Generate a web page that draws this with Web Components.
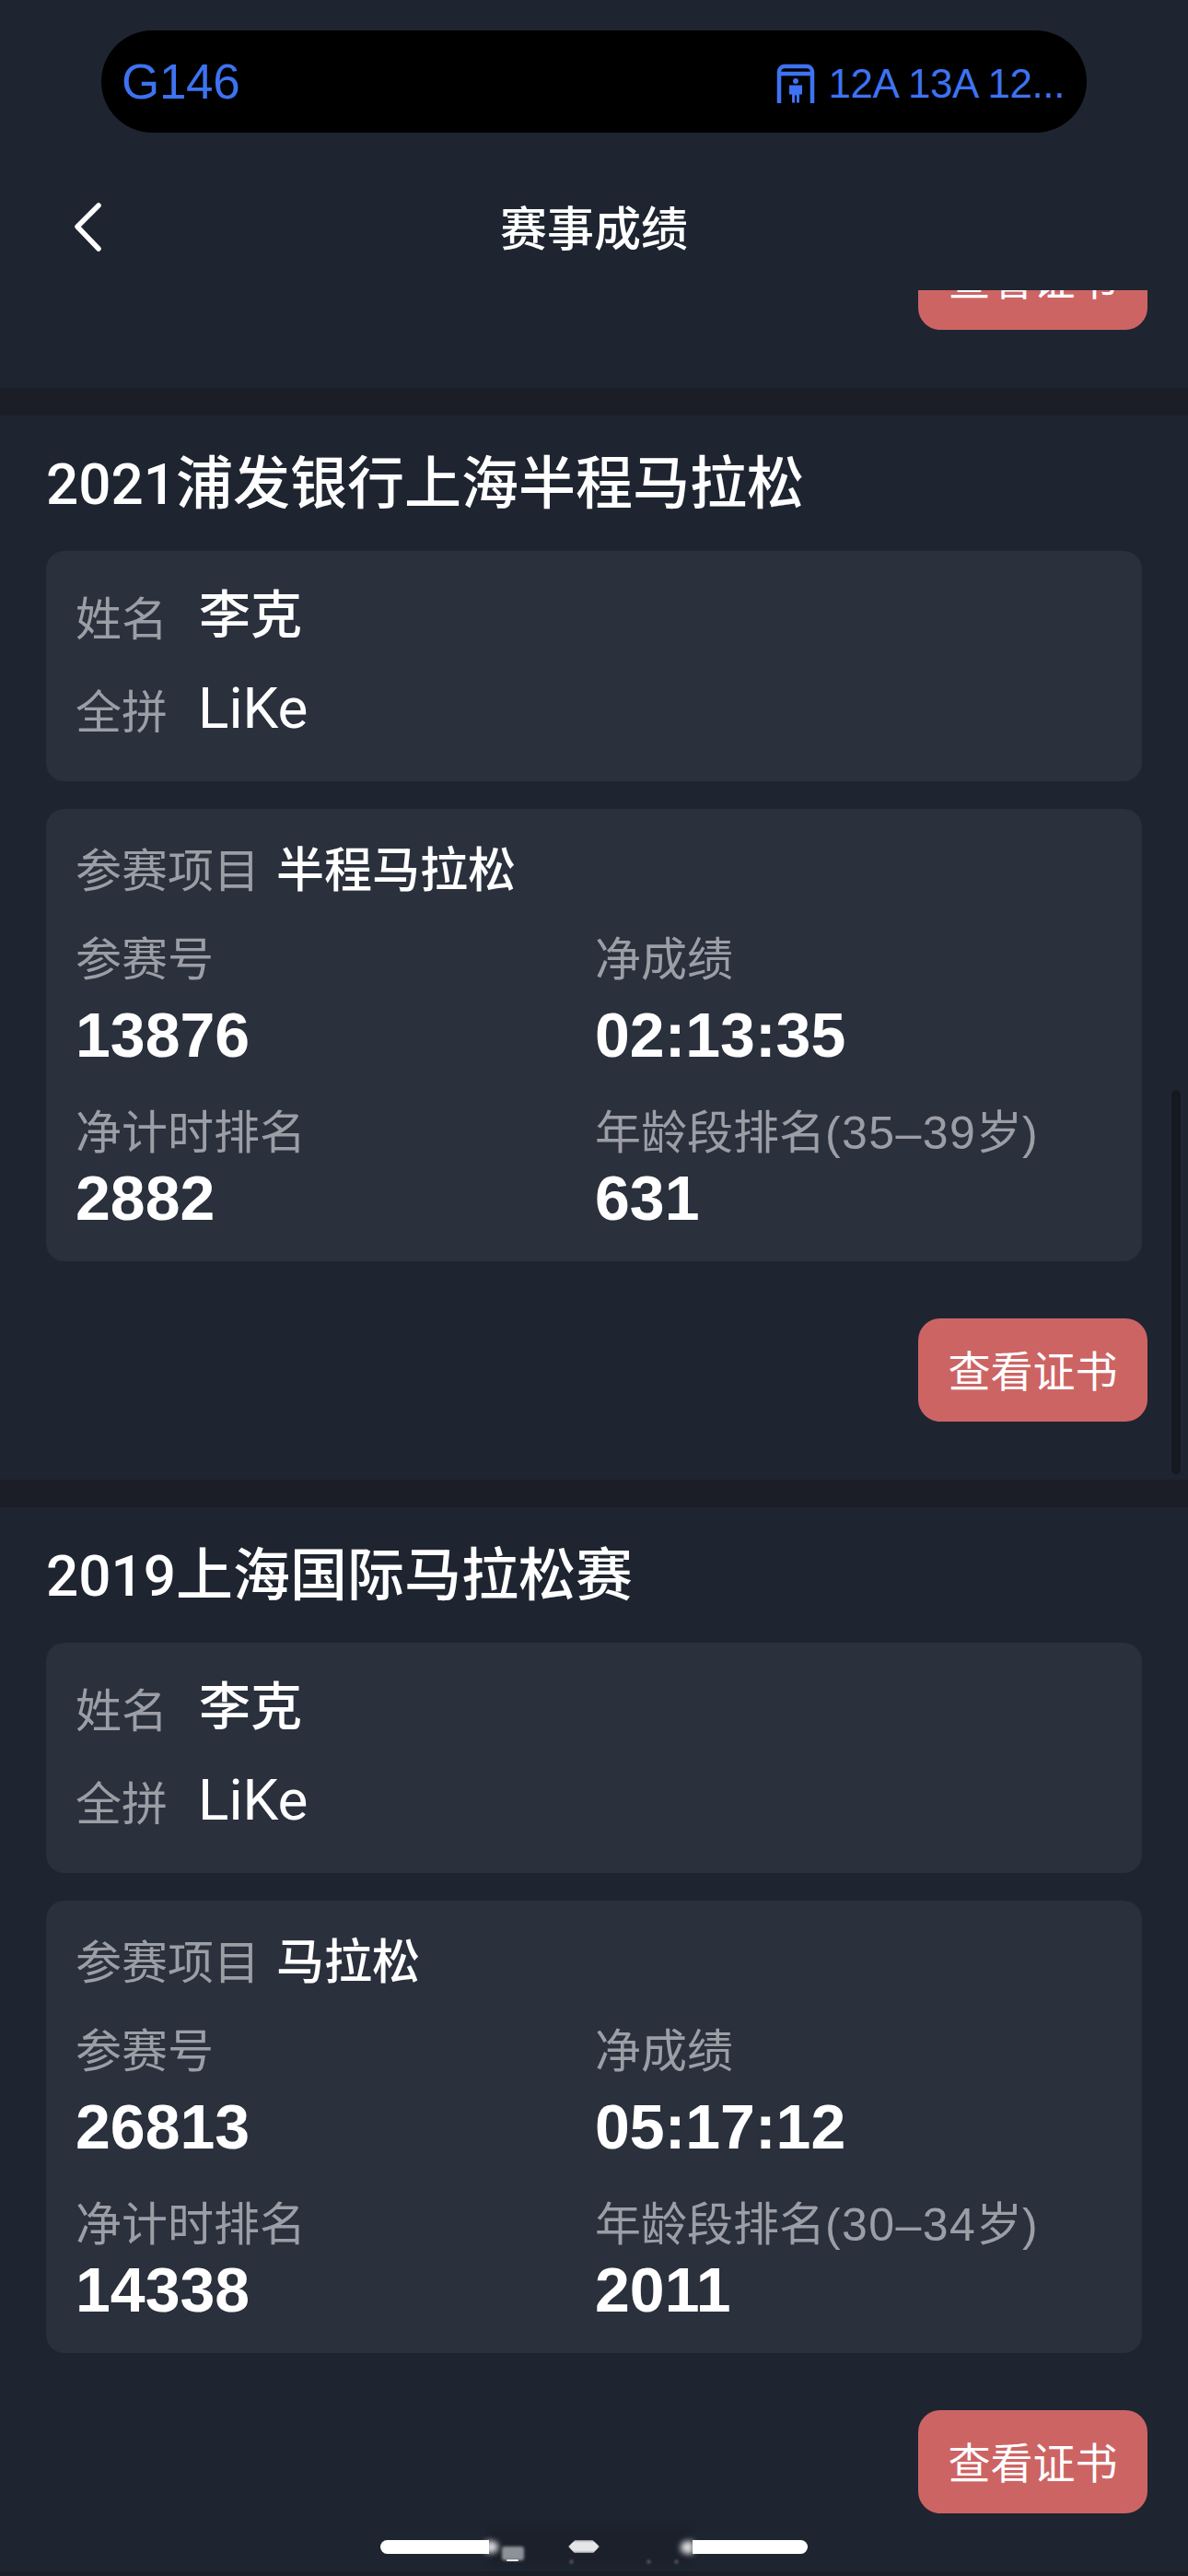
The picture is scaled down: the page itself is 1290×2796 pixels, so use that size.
<!DOCTYPE html>
<html lang="zh-CN"><head><meta charset="utf-8">
<style>
html,body{margin:0;padding:0;background:#1e2530}
body{width:1290px;height:2796px;overflow:hidden;position:relative;font-family:"Liberation Sans","Noto Sans CJK SC",sans-serif;color:#fff}
</style></head><body>
<app-header></app-header>
<score-list>
<div class="clip" slot="clip"><cert-button></cert-button></div>
<race-card title-text="2021浦发银行上海半程马拉松" event="半程马拉松" bib="13876" net="02:13:35" rank="2882" age="35–39" agerank="631"></race-card>
<race-card title-text="2019上海国际马拉松赛" event="马拉松" bib="26813" net="05:17:12" rank="14338" age="30–34" agerank="2011"></race-card>
</score-list>
<home-bar></home-bar>
<script>
const def=(n,html,setup)=>customElements.define(n,class extends HTMLElement{constructor(){super();this.attachShadow({mode:'open'}).innerHTML=html;}connectedCallback(){setup&&setup(this)}});
def('app-header',`<style>
:host{display:block;height:315px;box-sizing:border-box;padding-top:33px}
.pill{margin:0 110px;height:111px;background:#000;border-radius:56px;display:flex;align-items:center;justify-content:space-between;padding:0 24px 0 22px;color:#3d73f2}
.g{font-size:53px;line-height:1;letter-spacing:-.3px}
.r{display:flex;align-items:center;gap:14px;font-size:44px;letter-spacing:-.4px;padding-top:5px}
.nav{height:171px;box-sizing:border-box;padding-top:31px;display:grid;grid-template-columns:1fr auto 1fr;align-items:center}
.nav b{font:500 51px/1 "Noto Sans CJK SC",sans-serif}
svg.back{margin:2px 0 0 79px;display:block}
</style>
<div class="pill"><span class="g">G146</span><span class="r"><svg width="42" height="44" viewBox="0 0 42 44"><path d="M3 43V9a6 6 0 0 1 6-6h24a6 6 0 0 1 6 6v34M3 11h36" fill="none" stroke="#3d73f2" stroke-width="4.5"/><circle cx="21" cy="19" r="3" fill="#3d73f2"/><path d="M14 23.500h14v10h-3v9h-3v-8h-2v8h-3v-9h-3z" fill="#3d73f2"/></svg><span>12A 13A 12...</span></span></div>
<div class="nav"><svg class="back" width="32" height="54" viewBox="0 0 32 54"><path d="M28 4 5 27l23 24" fill="none" stroke="#fff" stroke-width="5.500" stroke-linecap="round" stroke-linejoin="round"/></svg><b>赛事成绩</b><span></span></div>`);
def('cert-button',`<style>
:host{display:flex;flex:none;align-items:center;justify-content:center;box-sizing:border-box;padding-bottom:4px;width:249px;height:112px;background:#cd6464;border-radius:24px;color:#fff;font:400 46px/1 "Noto Sans CJK SC",sans-serif}
</style><span>查看证书</span>`);
def('score-list',`<style>
:host{display:block}
::slotted(.clip){box-sizing:border-box;height:106px;overflow:hidden;display:flex;flex-direction:column;justify-content:flex-end;align-items:flex-end;padding:0 44px 63px 0}
.thumb{position:absolute;left:1272px;top:1183px;width:10px;height:417px;background:#151922;border-radius:5px}
.end{height:31px;background:#1b1e26}
</style><slot name="clip"></slot><slot></slot><div class="end"></div><div class="thumb"></div>`);
def('race-card',`<style>
:host{display:block;border-top:30px solid #1b1e26;padding:0 50px;height:1155px;background:#1e2530}
h2{margin:0;font:500 62px/1 Roboto,"Noto Sans CJK SC",sans-serif;height:147px;display:flex;align-items:center;padding-top:2px;box-sizing:border-box}
.panel{background:#2a303c;border-radius:20px;padding:0 32px;box-sizing:border-box;width:1190px}
.id{height:250px;padding-top:39px;margin-bottom:30px}
.row{display:flex;align-items:center;height:62px;margin-bottom:39px}
.k{color:#9c9ea6;font-size:50px;font-family:"Noto Sans CJK SC",sans-serif}
.k i{font:normal 400 50px "Liberation Sans",sans-serif;letter-spacing:1.4px}
.row .k{width:134px}
.row .v{font:500 56px/1 Roboto,"Noto Sans CJK SC",sans-serif}
.row .v.lat{font:400 62px/1 Roboto,sans-serif;margin-left:-1px}
.res{height:491px;padding-top:32px}
.ev{display:flex;align-items:center;height:62px;gap:18px}
.ev .v{font:500 52px/1 "Noto Sans CJK SC",sans-serif}
.grid{display:grid;grid-template-columns:564px 1fr;margin-top:34px}
.c .k{display:block;height:62px;line-height:62px;white-space:nowrap}
.c .n{font:700 68px/1 "Liberation Sans",sans-serif;display:block}
.c.a .n{margin:21px 0 37px}
.c.b .n{margin-top:10px}
.foot{display:flex;justify-content:flex-end;margin:62px -6px 0 0}
</style>
<h2 id="t"></h2>
<div class="panel id"><div class="row"><span class="k">姓名</span><span class="v">李克</span></div><div class="row"><span class="k">全拼</span><span class="v lat">LiKe</span></div></div>
<div class="panel res"><div class="ev"><span class="k">参赛项目</span><span class="v" id="e"></span></div>
<div class="grid">
<div class="c a"><span class="k">参赛号</span><span class="n" id="b"></span></div>
<div class="c a"><span class="k">净成绩</span><span class="n" id="ne"></span></div>
<div class="c b"><span class="k">净计时排名</span><span class="n" id="r"></span></div>
<div class="c b"><span class="k">年龄段排名<i>(<span id="al"></span></i>岁<i>)</i></span><span class="n" id="ar"></span></div>
</div></div>
<div class="foot"><cert-button></cert-button></div>`,el=>{const s=el.shadowRoot,a=n=>el.getAttribute(n);
s.getElementById('t').textContent=a('title-text');s.getElementById('e').textContent=a('event');s.getElementById('b').textContent=a('bib');s.getElementById('ne').textContent=a('net');s.getElementById('r').textContent=a('rank');s.getElementById('al').textContent=a('age');s.getElementById('ar').textContent=a('agerank');});
def('home-bar',`<style>
:host{position:absolute;left:413px;top:2757px;width:464px;height:15px;display:block}
.l,.rr{position:absolute;top:0;height:15px;background:#fff}
.l{left:0;width:118px;border-radius:8px 0 0 8px}
.rr{right:0;width:125px;border-radius:0 8px 8px 0}
.smudge{position:absolute;left:117px;top:-14px;width:220px;height:42px;background:#1c202b;filter:blur(3px)}
.blob{position:absolute;background:#e6e6e8;filter:blur(1.500px)}
.soft{position:absolute;background:#dcdcdf;filter:blur(3px)}
</style><div class="smudge"></div>
<div class="soft" style="left:114px;top:1px;width:14px;height:13px;border-radius:0 8px 8px 0"></div>
<div class="soft" style="left:326px;top:1px;width:14px;height:14px;border-radius:8px 0 0 8px"></div>
<div class="l"></div><div class="rr"></div>
<div class="blob" style="left:132px;top:7px;width:24px;height:15px;background:#8e9198;border-radius:3px"></div>
<div class="blob" style="left:137px;top:21px;width:13px;height:2px;background:#e8e8ea;filter:none;border-radius:2px"></div>
<div class="blob" style="left:204px;top:0;width:34px;height:14px;clip-path:polygon(22% 0,78% 0,100% 50%,80% 100%,20% 100%,0 50%)"></div>
<div class="blob" style="left:206px;top:22px;width:3px;height:3px;background:#777a82"></div>
<div class="blob" style="left:290px;top:22px;width:3px;height:3px;background:#777a82"></div>
<div class="blob" style="left:320px;top:22px;width:3px;height:3px;background:#777a82"></div>`);
</script>
</body></html>
